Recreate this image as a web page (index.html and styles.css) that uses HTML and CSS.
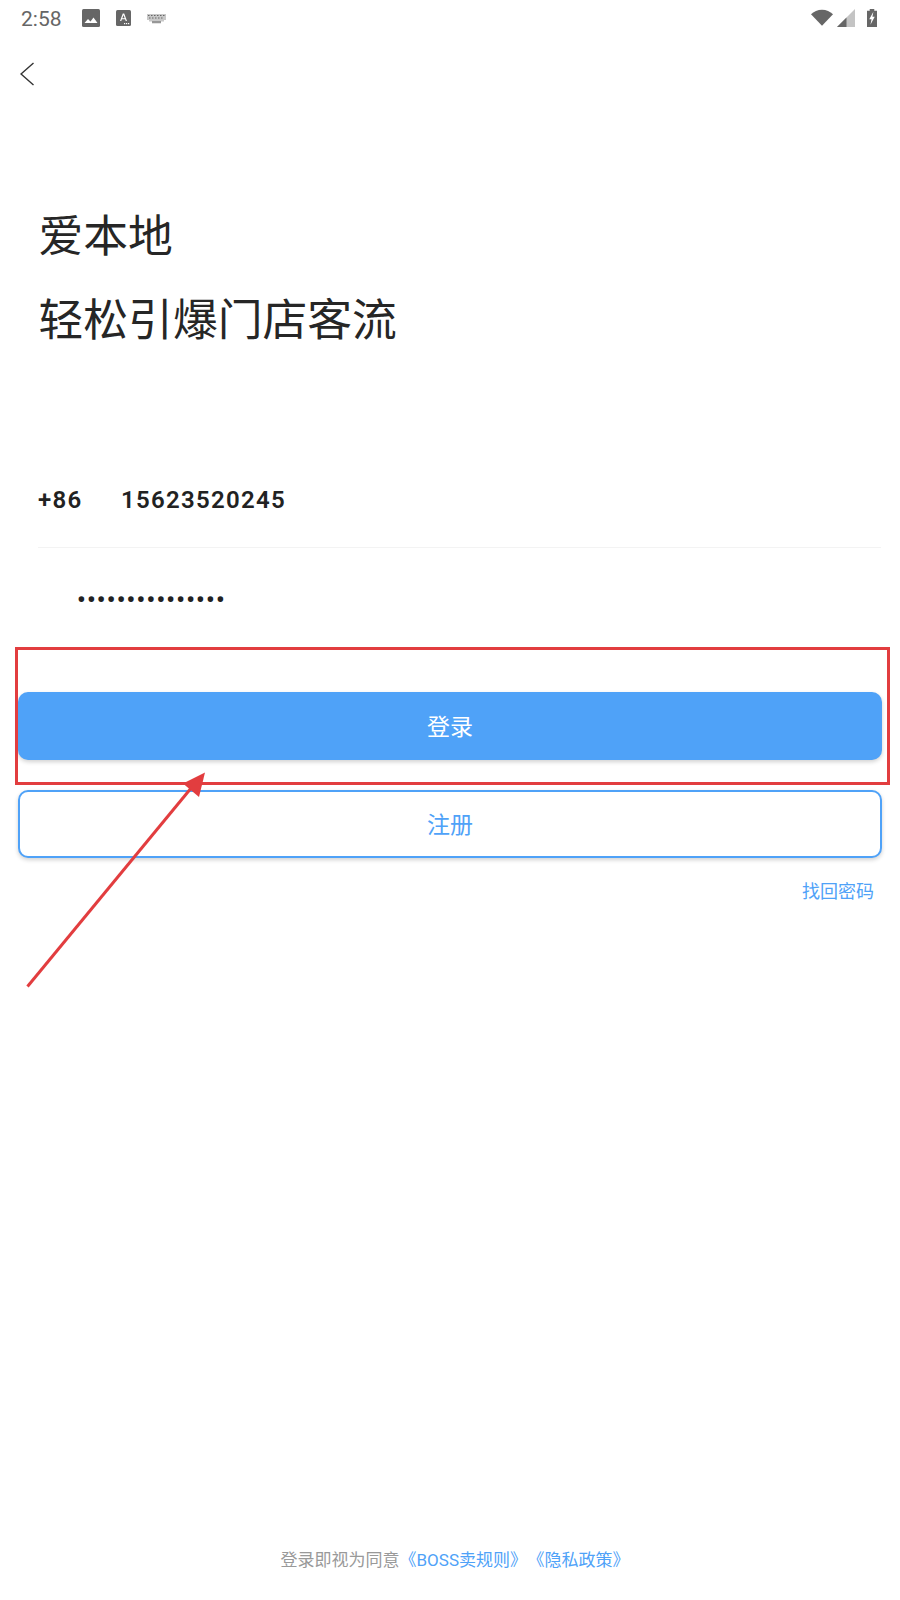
FILE: index.html
```html
<!DOCTYPE html>
<html lang="zh">
<head>
<meta charset="utf-8">
<title>登录</title>
<link rel="stylesheet" href="styles.css">
</head>
<body>
<div class="page">
  <div class="status">
    <div class="status-left">
      <span class="time">2:58</span>
      <svg class="ic-img" viewBox="0 0 18 18"><rect width="18" height="18" rx="1.5" fill="#666"/><path d="M2.5 14l3.5-4 2.5 2.5 3-4 4 5.500z" fill="#fff"/></svg>
      <svg class="ic-a" viewBox="0 0 15 16"><rect width="15" height="16" rx="1.500" fill="#666"/><path d="M4 11L6.800 3.500h1.400L11 11H9.700L9.100 9.300H5.900L5.300 11zM6.300 8.200h2.400L7.500 4.900z" fill="#fff"/><rect x="8" y="13" width="1.200" height="1.200" fill="#fff"/><rect x="10" y="13" width="1.200" height="1.200" fill="#fff"/><rect x="12" y="13" width="1.200" height="1.200" fill="#fff"/></svg>
      <svg class="ic-kb" viewBox="0 0 19 10"><path d="M0 0h19v6H17v1.500H14V9.500H5V7.500H2V6H0z" fill="#c8c8c8"/><path d="M1 1h1.500v1H1zM4 1h1.500v1H4zM7 1h1.500v1H7zM10 1h1.500v1H10zM13 1h1.500v1H13zM16 1h1.500v1H16zM2 3.500h1.500v1H2zM5 3.500h1.500v1H5zM8 3.500h1.500v1H8zM11 3.500h1.500v1H11zM14 3.500h1.500v1H14zM5 7.500h9v1H5z" fill="#666"/></svg>
    </div>
    <div class="status-right">
      <svg class="ic-wifi" viewBox="0 0 24 18"><path d="M0 5.500C3 2.500 7.300 0.500 12 0.500S21 2.500 24 5.500L12 18z" fill="#666"/></svg>
      <svg class="ic-signal" viewBox="0 0 19 19"><path d="M19 0V19H0z" fill="#c4c4c4"/><path d="M10 9V19H0z" fill="#666"/></svg>
      <svg class="ic-batt" viewBox="0 0 11 20"><path d="M3 0h5v2h3v18H0V2h3z" fill="#666"/><path d="M7 3L2.500 11.500h2.500L3.800 17.500 8.500 8.500H6z" fill="#fff"/></svg>
    </div>
  </div>
  <div class="nav">
    <svg class="back" viewBox="0 0 16 26"><path d="M14.500 1L1 13l13.500 12" fill="none" stroke="#333" stroke-width="1.500"/></svg>
  </div>
  <h1 class="title"><span>爱本地</span><span>轻松引爆门店客流</span></h1>
  <div class="phone"><span class="code">+86</span><span class="num">15623520245</span></div>
  <div class="pass">•••••••••••••••</div>
  <div class="actions">
    <div class="btn btn-primary">登录</div>
    <div class="btn btn-outline">注册</div>
    <div class="forgot">找回密码</div>
  </div>
  <div class="agree">登录即视为同意<a>《BOSS卖规则》</a><a class="policy">《隐私政策》</a></div>
  <svg class="annot" viewBox="0 0 900 1600">
    <rect x="16.500" y="648.500" width="872" height="135" fill="none" stroke="#e23d3f" stroke-width="3"/>
    <path d="M27.500 986.500L192 787" fill="none" stroke="#e23d3f" stroke-width="3"/>
    <path d="M205 772.500L183 783.500L199 797z" fill="#e23d3f"/>
  </svg>
</div>
</body>
</html>
```
FILE: styles.css
```css
* { box-sizing: border-box; }
html, body { margin: 0; padding: 0; background: #fff; }
body { font-family: Roboto, "Noto Sans CJK SC", sans-serif; }
.page { position: relative; width: 900px; height: 1600px; display: flex; flex-direction: column; overflow: hidden; }
.status { height: 38px; display: flex; justify-content: space-between; align-items: center; padding: 0 23px 0 21px; }
.status-left { display: flex; align-items: center; }
.time { font-size: 21px; color: #666; width: 61px; }
.ic-img { width: 18px; height: 18px; margin-bottom: 2px; }
.ic-a { width: 15px; height: 16px; margin: 0 0 2px 16px; }
.ic-kb { width: 19px; height: 10px; margin: 0 0 1px 16px; }
.status-right { display: flex; align-items: center; margin-bottom: 3px; }
.ic-wifi { width: 22px; height: 17px; }
.ic-signal { width: 18px; height: 18px; margin-left: 4px; }
.ic-batt { width: 10px; height: 20px; margin-left: 12px; }
.nav { height: 72px; display: flex; align-items: center; padding-left: 20px; }
.back { width: 15px; height: 24px; }
.title { margin: 85px 0 0 38.500px; font-weight: 400; font-size: 44.800px; line-height: 84px; color: #262626; display: flex; flex-direction: column; height: 168px; }
.phone { margin: 118px 0 0 38px; height: 67px; width: 843px; border-bottom: 1px solid #f3f3f3; font-size: 24px; font-weight: 600; letter-spacing: 1.300px; color: #222; line-height: 28px; padding-top: 5px; display: flex; }
.code { width: 83px; }
.pass { margin: 40px 0 0 77px; font-size: 24px; font-weight: 700; letter-spacing: 1.300px; color: #222; line-height: 24px; height: 24px; }
.actions { margin: 80px 18px 0; display: flex; flex-direction: column; }
.btn { height: 68px; border-radius: 10px; display: flex; align-items: center; justify-content: center; padding-bottom: 2px; font-size: 23px; box-shadow: 0 2px 4px rgba(0,0,0,.18); }
.btn-primary { background: #4fa2f8; color: #fff; }
.btn-outline { margin-top: 30px; background: #fff; border: 2px solid #4fa2f8; color: #4fa2f8; }
.forgot { align-self: flex-end; margin: 21px 8px 0 0; font-size: 18px; line-height: 26px; color: #4fa2f8; }
.agree { position: absolute; left: 10px; right: 0; top: 1547px; text-align: center; font-size: 17px; line-height: 26px; color: #999; }
.agree a { color: #4fa2f8; }
.agree .policy { margin-left: 9px; }
.annot { position: absolute; left: 0; top: 0; width: 900px; height: 1600px; pointer-events: none; }
```
